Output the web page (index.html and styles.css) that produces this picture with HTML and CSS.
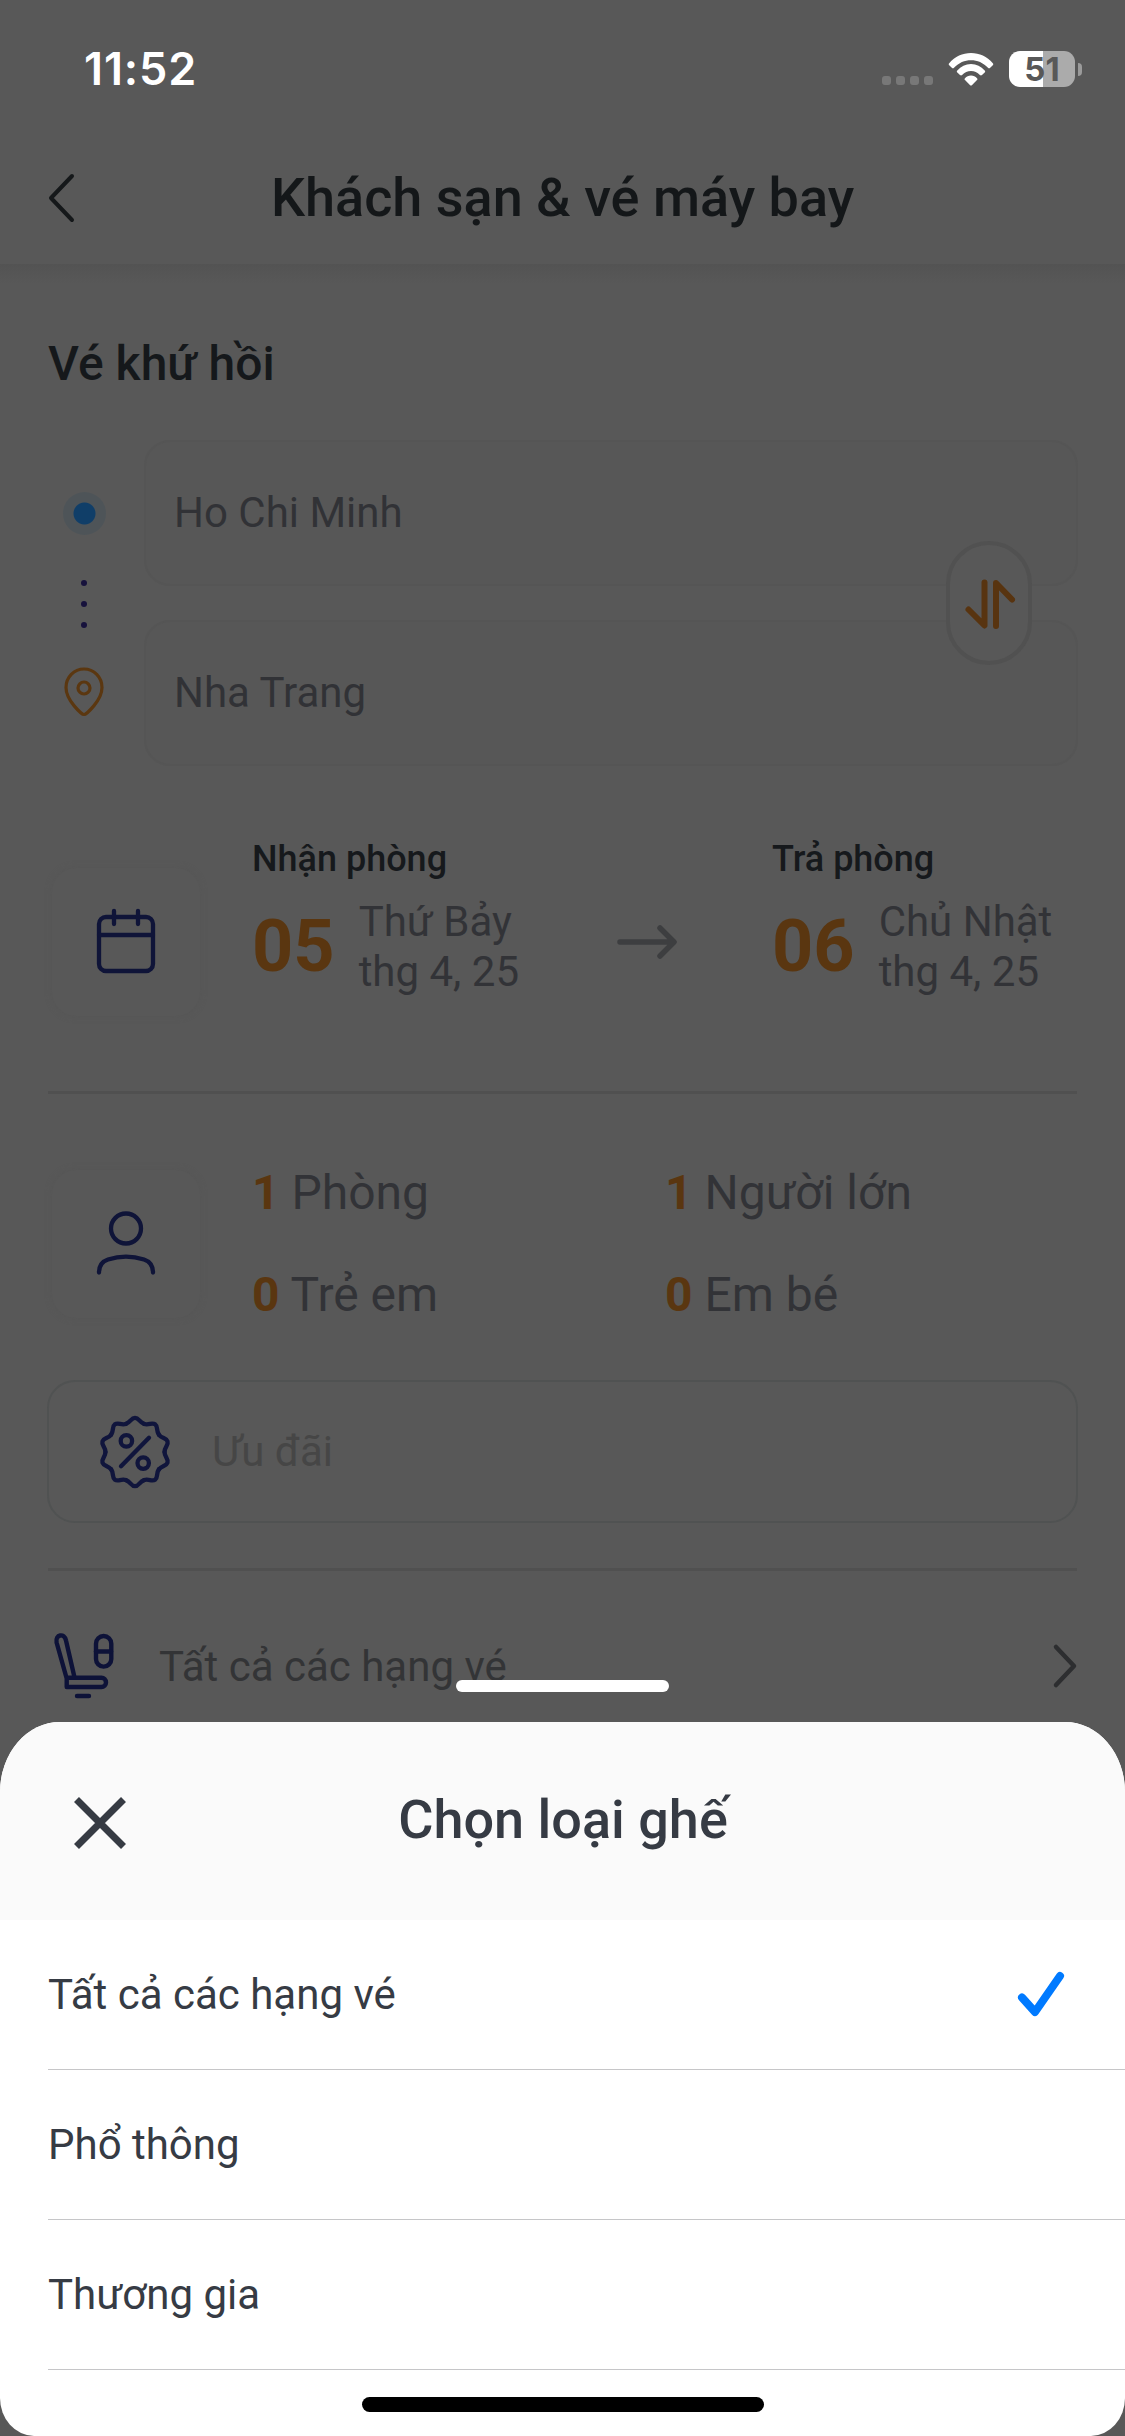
FILE: index.html
```html
<!DOCTYPE html>
<html lang="vi">
<head>
<meta charset="utf-8">
<title>Khách sạn &amp; vé máy bay</title>
<link rel="stylesheet" href="styles.css">
</head>
<body>
<div class="screen">
  <div class="status">
    <span class="clock">11:52</span>
    <div class="status-icons">
      <div class="cell"><i></i><i></i><i></i><i></i></div>
      <svg class="wifi" width="46" height="34" viewBox="0 0 46 34" fill="#fff">
        <path d="M1.2 11.2C7 4.6 14.5 1 23 1s16 3.600 21.800 10.200c.7.8.6 1.400 0 2l-2.600 2.600c-.7.7-1.500.7-2.200 0C35 10.600 29.500 8.200 23 8.200S11 10.600 6 15.800c-.7.7-1.500.7-2.200 0l-2.600-2.600c-.6-.6-.7-1.200 0-2z"/>
        <path d="M9.300 18.400C13 14.300 17.500 12 23 12s10 2.300 13.700 6.400c.7.8.6 1.400 0 2l-2.700 2.700c-.7.7-1.500.6-2.100 0-2.600-2.600-5.400-4-8.900-4s-6.300 1.400-8.900 4c-.6.6-1.400.7-2.100 0l-2.700-2.700c-.6-.6-.7-1.200 0-2z"/>
        <path d="M17 26.200c1.600-1.700 3.500-2.700 6-2.700s4.400 1 6 2.700c.6.7.6 1.300 0 1.900l-4.900 4.900c-.7.7-1.500.7-2.200 0L17 28.100c-.6-.6-.6-1.200 0-1.900z"/>
      </svg>
      <div class="battery"><span>51</span></div>
      <i class="battery-tip"></i>
    </div>
  </div>

  <header class="topbar">
    <svg class="back" width="28" height="50" viewBox="0 0 28 50"><path d="M24 3 3 25l21 22"/></svg>
    <h1>Khách sạn &amp; vé máy bay</h1>
  </header>

  <main>
    <h2>Vé khứ hồi</h2>

    <section class="route">
      <div class="markers">
        <span class="origin"></span>
        <div class="dots"><i></i><i></i><i></i></div>
        <svg width="44" height="50" viewBox="0 0 44 50" class="pin"><path d="M22 47.500c-2.200 0-18-14-18-27a18 18.500 0 0 1 36 0c0 13-15.800 27-18 27z"/><circle cx="22" cy="21" r="6"/></svg>
      </div>
      <div class="fields">
        <div class="field">Ho Chi Minh</div>
        <div class="field">Nha Trang</div>
        <div class="swap"><svg width="50" height="50" viewBox="0 0 50 50"><path d="M4.500 31.500 20.500 47.500V4.500M32 48V5L48 21.500"/></svg></div>
      </div>
    </section>

    <section class="dates">
      <div class="tile"><svg width="62" height="68" viewBox="0 0 62 68"><rect x="4" y="9" width="54" height="54" rx="7"/><path d="M4 27h54M19 3v13M43 3v13"/></svg></div>
      <div class="stay checkin">
        <div class="label">Nhận phòng</div>
        <div class="date"><b>05</b><div>Thứ Bảy<br>thg 4, 25</div></div>
      </div>
      <svg class="arrow" width="60" height="36" viewBox="0 0 60 36"><path d="M3 18h53M43 4l14 14-14 14"/></svg>
      <div class="stay checkout">
        <div class="label">Trả phòng</div>
        <div class="date"><b>06</b><div>Chủ Nhật<br>thg 4, 25</div></div>
      </div>
    </section>

    <hr class="rule">

    <section class="guests">
      <div class="tile"><svg width="62" height="68" viewBox="0 0 62 68"><circle cx="31" cy="18.500" r="15"/><path d="M4 62.500c0-7 3-11 9-13 11-3.500 25-3.500 36 0 6 2 9 6 9 13"/></svg></div>
      <div class="counts">
        <div><b>1</b> Phòng</div><div><b>1</b> Người lớn</div>
        <div><b>0</b> Trẻ em</div><div><b>0</b> Em bé</div>
      </div>
    </section>

    <section class="promo">
      <svg width="74" height="74" viewBox="-37 -37 74 74">
        <defs><path id="lobe" d="M-9.100-28.100C-4.300-29.600-4-34.200 0-34.200S4.300-29.600 9.100-28.100"/></defs>
        <use href="#lobe"/><use href="#lobe" transform="rotate(36)"/><use href="#lobe" transform="rotate(72)"/><use href="#lobe" transform="rotate(108)"/><use href="#lobe" transform="rotate(144)"/><use href="#lobe" transform="rotate(180)"/><use href="#lobe" transform="rotate(216)"/><use href="#lobe" transform="rotate(252)"/><use href="#lobe" transform="rotate(288)"/><use href="#lobe" transform="rotate(324)"/>
        <circle cx="-8.600" cy="-11.100" r="5.700"/><circle cx="8.200" cy="11.100" r="5.700"/><path d="M-14 14.300 14-14.300"/>
      </svg>
      <span>Ưu đãi</span>
    </section>

    <hr class="rule">

    <section class="seat">
      <svg class="seat-icon" width="64" height="68" viewBox="0 0 64 68">
        <path d="M14.700 46.500 4.600 10.500C3 2.500 12.500.5 14 8.500L22.200 44M14.700 46.500V55h34.700a4.500 4.500 0 0 0 0-9.200H14.700M25 64h12"/>
        <rect x="44" y="4" width="15.300" height="30.600" rx="7.650"/><path d="M44 19.500h15"/>
      </svg>
      <span>Tất cả các hạng vé</span>
      <svg class="next" width="24" height="44" viewBox="0 0 24 44"><path d="M3 3l18 19L3 41"/></svg>
    </section>
  </main>

  <div class="sheet-layer">
    <div class="grabber"></div>
    <div class="sheet">
      <div class="sheet-head">
        <svg width="54" height="54" viewBox="0 0 54 54"><path d="M3.500 3.500l47 47M50.500 3.500l-47 47"/></svg>
        <h3>Chọn loại ghế</h3>
      </div>
      <ul>
        <li><span>Tất cả các hạng vé</span><svg width="48" height="48" viewBox="0 0 48 48"><path d="M5 26.500 18 41 43 5"/></svg></li>
        <li><span>Phổ thông</span></li>
        <li><span>Thương gia</span></li>
      </ul>
      <div class="home"></div>
    </div>
  </div>
</div>
</body>
</html>
```
FILE: styles.css
```css
* { box-sizing: border-box; }
body { margin: 0; background: #585858; font-family: Roboto, "Noto Sans", sans-serif; }
h1, h2, h3, ul, hr { margin: 0; padding: 0; border: 0; }
h1, h2, h3 { font-weight: 500; }
svg { display: block; flex: none; fill: none; stroke-linecap: round; stroke-linejoin: round; overflow: visible; }
i { display: block; }

.screen { position: relative; width: 1125px; height: 2436px; overflow: hidden; background: #585858; }

.status { height: 132px; padding: 6px 43px 0 84px; display: flex; align-items: center; justify-content: space-between; }
.clock { font: 600 45px/54px Inter, sans-serif; letter-spacing: .9px; color: #fff; }
.status-icons { display: flex; align-items: center; }
.cell { display: flex; gap: 5px; margin: 23px 15px 0 0; }
.cell i { width: 9px; height: 9px; border-radius: 3px; background: #787878; }
.wifi { fill: #fff; margin-right: 15px; }
.battery { width: 66px; height: 36px; border-radius: 11px; background: linear-gradient(90deg, #fff 34px, #ababab 34px); text-align: center; font: 700 33px/36px Inter, sans-serif; color: #585858; }
.battery-tip { width: 4px; height: 13px; margin-left: 3px; border-radius: 0 4px 4px 0; background: #9b9b9b; }

.topbar { position: relative; height: 132px; padding: 0 48px; display: flex; align-items: center; }
.topbar::after { content: ""; position: absolute; left: 0; right: 0; top: 132px; height: 20px; background: linear-gradient(#535353, #585858); }
.topbar h1 { flex: 1; margin-right: 28px; text-align: center; font-size: 54px; line-height: 64px; color: #141719; }
.back { stroke: #15181a; stroke-width: 4; }

main { padding: 72px 48px 0; }
h2 { font-size: 48px; line-height: 56px; color: #15181b; }

.route { margin-top: 48px; display: flex; gap: 24px; height: 326px; color: #313236; }
.markers { width: 72px; padding: 52px 0 49px; display: flex; flex-direction: column; align-items: center; justify-content: space-between; }
.origin { width: 43px; height: 43px; border-radius: 50%; background: radial-gradient(circle, #103e68 10.5px, #4e5458 11.5px); }
.dots { display: flex; flex-direction: column; gap: 15px; margin-top: 5px; }
.dots i { width: 6px; height: 6px; border-radius: 50%; background: #17123c; }
.pin { stroke: #5b3710; stroke-width: 3.2; }
.fields { position: relative; flex: 1; display: flex; flex-direction: column; gap: 34px; margin-right: -1px; }
.field { height: 146px; padding-left: 28px; border: 2px solid #555; border-radius: 26px; background: #575757; font-size: 42px; line-height: 142px; }
.swap { position: absolute; right: 46px; top: 101px; width: 86px; height: 124px; border: 4px solid #515151; border-radius: 43px; background: #585858; display: flex; align-items: center; justify-content: center; }
.swap svg { stroke: #583410; stroke-width: 6; }

.dates { margin-top: 72px; height: 182px; display: flex; align-items: flex-start; }
.tile { width: 148px; height: 148px; margin: 4px; border-radius: 24px; background: #585858; box-shadow: 0 0 6px #565656; display: flex; align-items: center; justify-content: center; flex: none; }
.tile svg { stroke: #0f1438; stroke-width: 4.3; }
.dates .tile { margin-top: 30px; }
.checkin { width: 365px; margin-left: 48px; }
.checkout { margin-left: 95px; }
.label { font-size: 36px; line-height: 42px; font-weight: 500; color: #16191c; white-space: nowrap; }
.date { margin-top: 17px; display: flex; align-items: center; gap: 24px; font-size: 42px; line-height: 50px; color: #323337; white-space: nowrap; }
.date b { font-size: 72px; color: #5a3610; }
.arrow { margin-top: 86px; stroke: #3d3e40; stroke-width: 5.5; }

.rule { height: 3px; background: #505050; margin-top: 71px; }

.guests { margin-top: 71px; height: 158px; display: flex; }
.guests .tile { margin-top: 5px; }
.counts { margin-left: 48px; display: grid; grid-template-columns: 413px 1fr; row-gap: 46px; font-size: 48px; line-height: 56px; color: #323337; }
.counts b { color: #5a3610; }

.promo { margin: 57px -1px 0 -1px; height: 143px; border: 2px solid #505252; border-radius: 28px; padding-left: 49px; display: flex; align-items: center; gap: 40px; font-size: 42px; color: #464646; }
.promo svg { stroke: #10153c; stroke-width: 4.3; }
.promo + .rule { margin-top: 45px; }

.seat { height: 190px; padding-left: 4px; display: flex; align-items: center; font-size: 42px; color: #333436; }
.seat-icon { stroke: #0d1238; stroke-width: 4.4; }
.seat span { flex: 1; margin-left: 43px; }
.next { stroke: #2d2e30; stroke-width: 4.5; }

.sheet-layer { position: absolute; left: 0; right: 0; top: 1680px; height: 756px; display: flex; flex-direction: column; }
.grabber { width: 213px; height: 12px; margin: 0 auto 30px; border-radius: 6px; background: #fff; flex: none; }
.sheet { flex: 1; background: #fff; border-radius: 60px 60px 34px 34px / 70px 70px 38px 38px; overflow: hidden; }
.sheet-head { height: 198px; padding: 4px 73px 0; display: flex; align-items: center; background: #fafafa; }
.sheet-head svg { stroke: #363b43; stroke-width: 7; stroke-linecap: butt; }
.sheet-head h3 { flex: 1; margin: -6px 53px 0 0; text-align: center; font-size: 54px; line-height: 64px; color: #363b44; }
ul { list-style: none; padding-left: 48px; }
li { height: 150px; border-bottom: 1px solid #c6c6c8; padding-right: 60px; display: flex; align-items: center; justify-content: space-between; font-size: 42px; color: #363b44; }
li svg { stroke: #007aff; stroke-width: 8; }
.home { width: 402px; height: 15px; margin: 27px auto 0; border-radius: 8px; background: #000; }
```
